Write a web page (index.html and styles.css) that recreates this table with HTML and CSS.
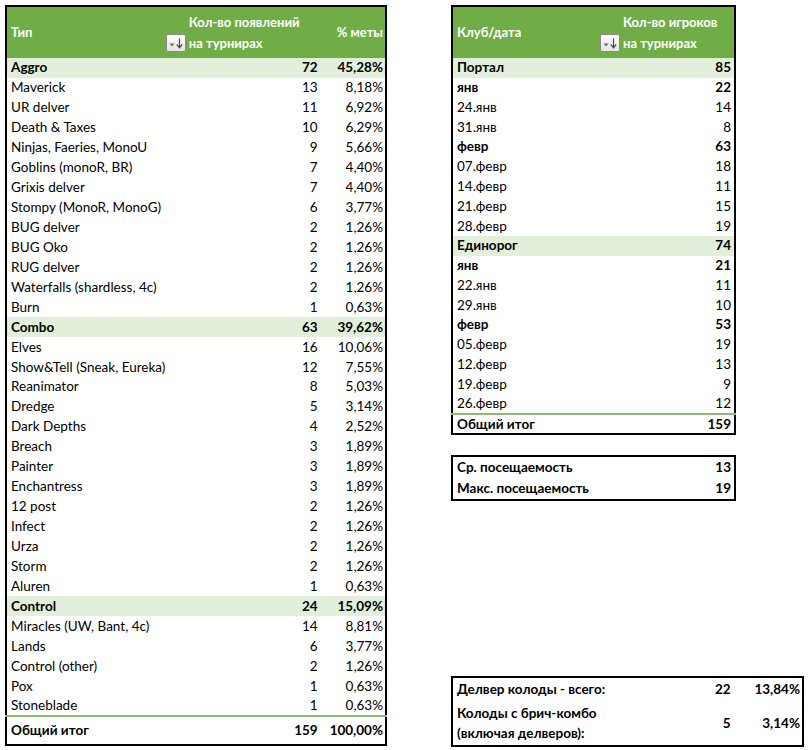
FILE: index.html
```html
<!DOCTYPE html>
<html lang="ru">
<head>
<meta charset="utf-8">
<title>Мета</title>
<link rel="stylesheet" href="styles.css">
</head>
<body>
<div class="page">
  <table class="pivot left">
    <colgroup><col class="c-name"><col class="c-cnt"><col class="c-pct"></colgroup>
    <thead>
      <tr class="head">
        <th class="h-name">Тип</th>
        <th class="h-cnt"><div class="hwrap"><span class="fbtn"><svg width="20" height="18" viewBox="0 0 20 18"><defs><linearGradient id="g1" x1="0" y1="0" x2="0" y2="1"><stop offset="0" stop-color="#ffffff"/><stop offset="1" stop-color="#e4e4e4"/></linearGradient></defs><rect x="0.5" y="0.5" width="19" height="17" rx="1.5" fill="url(#g1)" stroke="#8a8a8a"/><path d="M3.5 9.5h5l-2.5 3z" fill="#6b6b6b"/><path d="M13.5 4.5v8.5" stroke="#4a4a4a" stroke-width="1.2"/><path d="M10.8 10.5l2.7 3.2 2.7-3.2" fill="none" stroke="#4a4a4a" stroke-width="1.2"/></svg></span><span class="htext">Кол-во появлений<br>на турнирах</span></div></th>
        <th class="h-pct">% меты</th>
      </tr>
    </thead>
    <tbody>
      <tr class="cat"><td>Aggro</td><td class="n">72</td><td class="n">45,28%</td></tr>
      <tr><td>Maverick</td><td class="n">13</td><td class="n">8,18%</td></tr>
      <tr><td>UR delver</td><td class="n">11</td><td class="n">6,92%</td></tr>
      <tr><td>Death &amp; Taxes</td><td class="n">10</td><td class="n">6,29%</td></tr>
      <tr><td>Ninjas, Faeries, MonoU</td><td class="n">9</td><td class="n">5,66%</td></tr>
      <tr><td>Goblins (monoR, BR)</td><td class="n">7</td><td class="n">4,40%</td></tr>
      <tr><td>Grixis delver</td><td class="n">7</td><td class="n">4,40%</td></tr>
      <tr><td>Stompy (MonoR, MonoG)</td><td class="n">6</td><td class="n">3,77%</td></tr>
      <tr><td>BUG delver</td><td class="n">2</td><td class="n">1,26%</td></tr>
      <tr><td>BUG Oko</td><td class="n">2</td><td class="n">1,26%</td></tr>
      <tr><td>RUG delver</td><td class="n">2</td><td class="n">1,26%</td></tr>
      <tr><td>Waterfalls (shardless, 4c)</td><td class="n">2</td><td class="n">1,26%</td></tr>
      <tr><td>Burn</td><td class="n">1</td><td class="n">0,63%</td></tr>
      <tr class="cat"><td>Combo</td><td class="n">63</td><td class="n">39,62%</td></tr>
      <tr><td>Elves</td><td class="n">16</td><td class="n">10,06%</td></tr>
      <tr><td>Show&amp;Tell (Sneak, Eureka)</td><td class="n">12</td><td class="n">7,55%</td></tr>
      <tr><td>Reanimator</td><td class="n">8</td><td class="n">5,03%</td></tr>
      <tr><td>Dredge</td><td class="n">5</td><td class="n">3,14%</td></tr>
      <tr><td>Dark Depths</td><td class="n">4</td><td class="n">2,52%</td></tr>
      <tr><td>Breach</td><td class="n">3</td><td class="n">1,89%</td></tr>
      <tr><td>Painter</td><td class="n">3</td><td class="n">1,89%</td></tr>
      <tr><td>Enchantress</td><td class="n">3</td><td class="n">1,89%</td></tr>
      <tr><td>12 post</td><td class="n">2</td><td class="n">1,26%</td></tr>
      <tr><td>Infect</td><td class="n">2</td><td class="n">1,26%</td></tr>
      <tr><td>Urza</td><td class="n">2</td><td class="n">1,26%</td></tr>
      <tr><td>Storm</td><td class="n">2</td><td class="n">1,26%</td></tr>
      <tr><td>Aluren</td><td class="n">1</td><td class="n">0,63%</td></tr>
      <tr class="cat"><td>Control</td><td class="n">24</td><td class="n">15,09%</td></tr>
      <tr><td>Miracles (UW, Bant, 4c)</td><td class="n">14</td><td class="n">8,81%</td></tr>
      <tr><td>Lands</td><td class="n">6</td><td class="n">3,77%</td></tr>
      <tr><td>Control (other)</td><td class="n">2</td><td class="n">1,26%</td></tr>
      <tr><td>Pox</td><td class="n">1</td><td class="n">0,63%</td></tr>
      <tr><td>Stoneblade</td><td class="n">1</td><td class="n">0,63%</td></tr>
      <tr class="total"><td>Общий итог</td><td class="n">159</td><td class="n">100,00%</td></tr>
    </tbody>
  </table>

  <div class="side">
    <table class="pivot right">
      <colgroup><col class="c-club"><col class="c-players"></colgroup>
      <thead>
        <tr class="head">
          <th class="h-name">Клуб/дата</th>
          <th class="h-cnt"><div class="hwrap"><span class="fbtn"><svg width="20" height="18" viewBox="0 0 20 18"><defs><linearGradient id="g2" x1="0" y1="0" x2="0" y2="1"><stop offset="0" stop-color="#ffffff"/><stop offset="1" stop-color="#e4e4e4"/></linearGradient></defs><rect x="0.5" y="0.5" width="19" height="17" rx="1.5" fill="url(#g2)" stroke="#8a8a8a"/><path d="M3.5 9.5h5l-2.5 3z" fill="#6b6b6b"/><path d="M13.5 4.5v8.5" stroke="#4a4a4a" stroke-width="1.2"/><path d="M10.8 10.5l2.7 3.2 2.7-3.2" fill="none" stroke="#4a4a4a" stroke-width="1.2"/></svg></span><span class="htext">Кол-во игроков<br>на турнирах</span></div></th>
        </tr>
      </thead>
      <tbody>
        <tr class="cat"><td>Портал</td><td class="n">85</td></tr>
        <tr class="b"><td>янв</td><td class="n">22</td></tr>
        <tr><td>24.янв</td><td class="n">14</td></tr>
        <tr><td>31.янв</td><td class="n">8</td></tr>
        <tr class="b"><td>февр</td><td class="n">63</td></tr>
        <tr><td>07.февр</td><td class="n">18</td></tr>
        <tr><td>14.февр</td><td class="n">11</td></tr>
        <tr><td>21.февр</td><td class="n">15</td></tr>
        <tr><td>28.февр</td><td class="n">19</td></tr>
        <tr class="cat"><td>Единорог</td><td class="n">74</td></tr>
        <tr class="b"><td>янв</td><td class="n">21</td></tr>
        <tr><td>22.янв</td><td class="n">11</td></tr>
        <tr><td>29.янв</td><td class="n">10</td></tr>
        <tr class="b"><td>февр</td><td class="n">53</td></tr>
        <tr><td>05.февр</td><td class="n">19</td></tr>
        <tr><td>12.февр</td><td class="n">13</td></tr>
        <tr><td>19.февр</td><td class="n">9</td></tr>
        <tr><td>26.февр</td><td class="n">12</td></tr>
        <tr class="total small"><td>Общий итог</td><td class="n">159</td></tr>
      </tbody>
    </table>

    <table class="box stats">
      <tr><td>Ср. посещаемость</td><td class="n">13</td></tr>
      <tr><td>Макс. посещаемость</td><td class="n">19</td></tr>
    </table>

    <table class="box delver">
      <colgroup><col class="d-label"><col class="d-cnt"><col class="d-pct"></colgroup>
      <tr class="d1"><td>Делвер колоды - всего:</td><td class="n">22</td><td class="n">13,84%</td></tr>
      <tr class="d2"><td>Колоды с брич-комбо<br>(включая делверов):</td><td class="n">5</td><td class="n">3,14%</td></tr>
    </table>
  </div>
</div>
</body>
</html>
```

FILE: styles.css
```css
* { box-sizing: border-box; }
html, body { margin: 0; padding: 0; background: #fff; }
body {
  font-family: Lato, "Noto Sans", "Liberation Sans", sans-serif;
  font-size: 13.5px;
  color: #000;
}
.page {
  display: flex;
  align-items: flex-start;
  gap: 64px;
  padding: 5px 0 0 5px;
}
table {
  border-collapse: collapse;
  border-spacing: 0;
  table-layout: fixed;
}
td, th {
  padding: 0 4px;
  white-space: nowrap;
  line-height: 19px;
  height: 19.94px;
}
.n { text-align: right; }

.pivot, .box {
  border: 2px solid #000;
}
.left { width: 382px; }
.c-name { width: 156px; }
.c-cnt { width: 159px; }
.c-pct { width: 63px; }
.left td.n:nth-child(2) { padding-right: 5px; }
.left td.n:nth-child(3) { padding-right: 2px; }

.head th {
  background: #70ad47;
  color: #fff;
  font-weight: 700;
  font-size: 13px;
  height: 52px;
  text-align: left;
  vertical-align: middle;
}
.head .h-pct { text-align: right; padding-right: 2px; }
.head .h-cnt { padding: 0 0 0 3px; }
.hwrap {
  display: flex;
  align-items: flex-end;
  gap: 3px;
}
.fbtn { display: block; height: 18px; margin-bottom: 2px; }
.fbtn svg { display: block; }
.htext { line-height: 21px; display: block; }

.cat td { background: #e2efda; font-weight: 700; }
.b td { font-weight: 700; }
.total td {
  font-weight: 700;
  border-top: 2px solid #8fbb78;
  height: 29px;
}
.right td { height: 19.77px; }
.right .total.small td { height: 20px; line-height: 18px; }

.side {
  display: flex;
  flex-direction: column;
  width: 285px;
  height: 742px;
}
.right { width: 285px; }
.c-club { width: 144px; }
.c-players { width: 137px; }
.right td.n { padding-right: 3px; }

.stats {
  width: 285px;
  margin-top: 20px;
  font-weight: 700;
}
.stats td { height: 21px; line-height: 21px; }
.stats td.n { padding-right: 3px; }

.delver {
  margin-top: auto;
  width: 353px;
  font-weight: 700;
}
.d-label { width: 247px; }
.d-cnt { width: 34px; }
.d-pct { width: 68px; }
.delver td.n:nth-child(2) { padding-right: 4px; }
.delver td.n:nth-child(3) { padding-right: 2px; }
.d1 td { height: 22px; line-height: 22px; }
.d2 td { height: 46px; line-height: 20px; vertical-align: middle; }
```
